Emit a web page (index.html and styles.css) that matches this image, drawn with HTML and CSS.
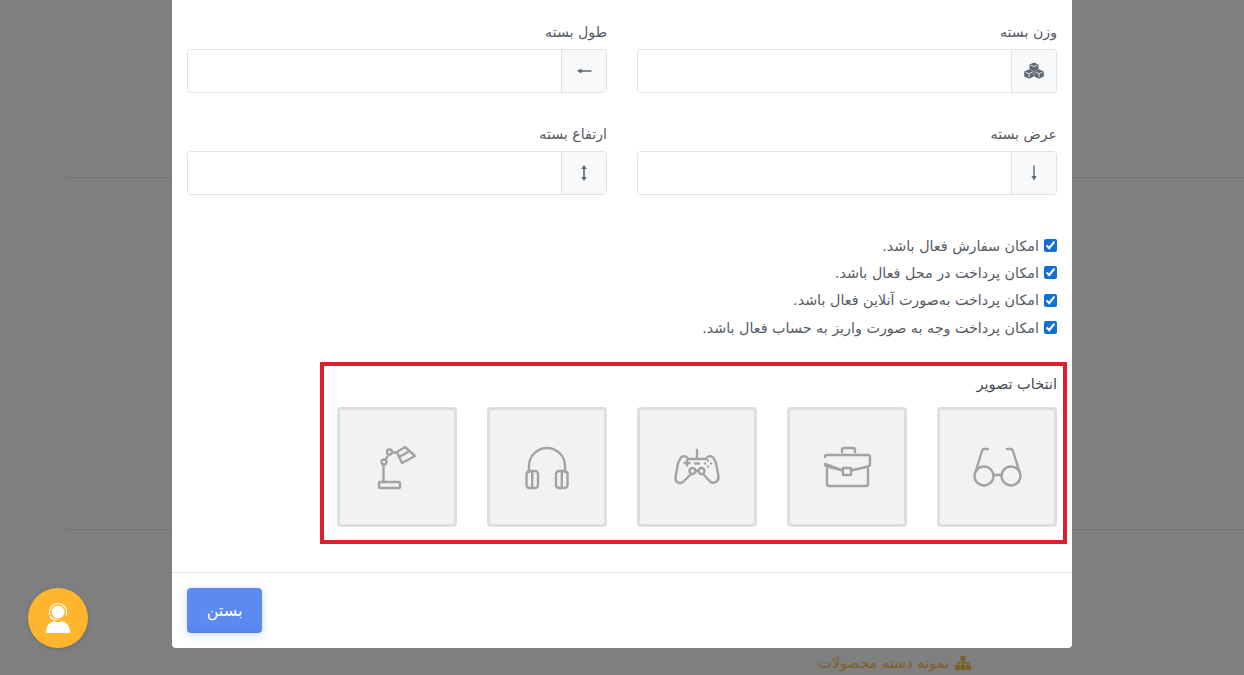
FILE: index.html
```html
<!DOCTYPE html>
<html lang="fa" dir="rtl">
<head>
    <meta charset="UTF-8">
    <meta name="viewport" content="width=device-width, initial-scale=1.0">
    <title>انتخاب تصویر</title>
    <link rel="stylesheet" href="styles.css">
</head>
<body>
    <!-- Page behind the dialog -->
    <div class="page">
        <div class="page-line"></div>
        <div class="page-line page-line-low"></div>
        <div class="page-title">
            <svg class="page-title-icon" viewBox="0 0 16 14"><path d="M5.500 0h5v4.500H8.700V6H14v3h2v5h-5V9h1.600V7.500H8.700V9H10.500v5h-5V9h1.800V7.500H3.400V9H5v5H0V9h2V6h5.300V4.500H5.500z"/></svg>
            <span>نمونه دسته محصولات</span>
        </div>
    </div>

    <!-- Support button -->
    <div class="support">
        <svg viewBox="0 0 60 60" width="60" height="60">
            <circle cx="30" cy="24" r="6.500" fill="#fff"/>
            <path d="M21.500 27v-3a8.500 8.500 0 0 1 17 0v3" fill="none" stroke="#fff" stroke-width="1.200"/>
            <path d="M22 28c1 3 4 3.500 7 3.500" fill="none" stroke="#fff" stroke-width="1.200"/>
            <path d="M18 45c-.500-6 3-10.500 8-12 2.500 1.500 5.500 1.500 8 0 5 1.500 8.500 6 8 12z" fill="#fff"/>
        </svg>
    </div>

    <div class="modal">
        <div class="modal-body">
            <div class="form-grid">
                <div class="field">
                    <label class="field-label">وزن بسته</label>
                    <div class="input-group">
                        <span class="addon">
                            <svg viewBox="0 0 20 18" width="20" height="18"><path class="solid" d="M10 .500l4.500 2v4.800L10 9.300l-4.500-2V2.500zM5 7.200l4.800 2.200v5L5 16.800l-4.800-2.400v-5zM15 7.200l4.800 2.200v5L15 16.800l-4.800-2.400v-5z"/><path class="cube-line" d="M6.500 3L10 4.600 13.500 3M1.500 10L5 11.700 8.500 10M5 11.700v3.600M11.500 10l3.500 1.700 3.500-1.700M15 11.700v3.600"/></svg>
                        </span>
                        <input class="text-input" type="text">
                    </div>
                </div>
                <div class="field">
                    <label class="field-label">طول بسته</label>
                    <div class="input-group">
                        <span class="addon">
                            <svg viewBox="0 0 16 16" width="16" height="16"><path class="solid" d="M1 8l4.500-2.600v1.900H15.500v1.400H5.500v1.900z"/></svg>
                        </span>
                        <input class="text-input" type="text">
                    </div>
                </div>
                <div class="field">
                    <label class="field-label">عرض بسته</label>
                    <div class="input-group">
                        <span class="addon">
                            <svg viewBox="0 0 16 16" width="16" height="16"><path class="solid" d="M8 15.500l-2.600-4.500h1.900V.500h1.400V11h1.900z"/></svg>
                        </span>
                        <input class="text-input" type="text">
                    </div>
                </div>
                <div class="field">
                    <label class="field-label">ارتفاع بسته</label>
                    <div class="input-group">
                        <span class="addon">
                            <svg viewBox="0 0 16 16" width="16" height="16"><path class="solid" d="M8 0l2.800 4H8.800v8h2L8 16l-2.800-4h2V4h-2z"/></svg>
                        </span>
                        <input class="text-input" type="text">
                    </div>
                </div>
            </div>

            <div class="checks">
                <label class="check"><input type="checkbox" checked> امکان سفارش فعال باشد.</label>
                <label class="check"><input type="checkbox" checked> امکان پرداخت در محل فعال باشد.</label>
                <label class="check"><input type="checkbox" checked> امکان پرداخت به‌صورت آنلاین فعال باشد.</label>
                <label class="check"><input type="checkbox" checked> امکان پرداخت وجه به صورت واریز به حساب فعال باشد.</label>
            </div>

            <div class="picker">
                <div class="picker-title">انتخاب تصویر</div>
                <div class="tiles">
                    <div class="tile">
                        <svg class="tile-icon" viewBox="0 0 60 60">
                            <circle cx="17" cy="39" r="9.500"/>
                            <circle cx="44" cy="39" r="9.500"/>
                            <path d="M26.500 38h8M8.500 35L15 14q.500-2 2.500-2H21M52.500 35L46 14q-.500-2-2.500-2H40"/>
                        </svg>
                    </div>
                    <div class="tile">
                        <svg class="tile-icon" viewBox="0 0 60 60">
                            <path d="M25 15v-2q0-2 2-2h9q2 0 2 2v2"/>
                            <path d="M8 20q0-2 2-2h41q2 0 2 2v7q0 2-2 2.500L34 33.500M26 33.500L10 29.500q-2-.5-2-2.500z"/>
                            <path d="M10 32v15q0 2 2 2h37q2 0 2-2V32"/>
                            <rect x="26" y="31" width="8" height="7"/>
                        </svg>
                    </div>
                    <div class="tile">
                        <svg class="tile-icon" viewBox="0 0 60 60">
                            <path d="M30 13v9"/>
                            <path d="M21 22h18c1-3 4.500-3.500 7-1.500 2 2 3 5 3.500 8l2 11c.500 5-5 8-8.500 5L37 38M23 38l-6.500 6.500C13 48 8 45 8.500 40l2-11c.500-3 1.500-6 3.500-8.500 2.500-2 6-1.500 7 1.500"/>
                            <circle cx="25.500" cy="34" r="3"/>
                            <circle cx="34.500" cy="34" r="3"/>
                            <path d="M28.500 34h3M20 23.500v5M17.500 26h5M28 26.500h4"/>
                            <path d="M41 23.500v.1M38 26.500v.1M44 26.500v.1M41 29.500v.1"/>
                        </svg>
                    </div>
                    <div class="tile">
                        <svg class="tile-icon" viewBox="0 0 60 60">
                            <path d="M12 35v-6a18 18 0 0 1 36 0v6"/>
                            <rect x="9.500" y="34" width="11.500" height="17" rx="3"/>
                            <rect x="39" y="34" width="11.500" height="17" rx="3"/>
                            <path d="M15.200 35v15M44.800 35v15"/>
                        </svg>
                    </div>
                    <div class="tile">
                        <svg class="tile-icon" viewBox="0 0 60 60">
                            <rect x="12" y="45" width="21" height="6" rx="1"/>
                            <circle cx="17" cy="25" r="2.500"/>
                            <circle cx="22.500" cy="15" r="2.500"/>
                            <path d="M16.500 27.500V45M18.500 23l3-5.500M25 15l5 1"/>
                            <path d="M30 15l8-5 10 9-13 7z"/>
                            <path d="M32 20l9-5"/>
                        </svg>
                    </div>
                </div>
            </div>
        </div>

        <div class="modal-footer">
            <button class="btn-close" type="button">بستن</button>
        </div>
    </div>
</body>
</html>
```

FILE: styles.css
```css
* {
  box-sizing: border-box;
}

html,
body {
  height: 100%;
  margin: 0;
  overflow: hidden;
}

body {
  background: #7f7f7f;
  font-family: "DejaVu Sans", "Noto Sans", sans-serif;
  font-size: 14px;
  color: #565a62;
}

/* Page behind the dialog */
.page {
  height: 100%;
  padding-top: 177px;
}

.page-line {
  height: 1px;
  margin-left: 67px;
  background: #747474;
}

.page-line-low {
  margin-top: 351px;
}

.page-title {
  display: flex;
  align-items: center;
  gap: 6px;
  margin-top: 125px;
  margin-right: 273px;
  color: #7d5f25;
  font-size: 14.5px;
}

.page-title-icon {
  width: 16px;
  height: 14px;
  fill: #7d5f25;
}

/* Support button */
.support {
  position: absolute;
  left: 28px;
  top: 588px;
  width: 60px;
  height: 60px;
  border-radius: 50%;
  background: #ffb52e;
  box-shadow: 0 1px 4px rgba(0, 0, 0, 0.15);
}

/* Dialog */
.modal {
  position: absolute;
  left: 172px;
  top: 0;
  width: 900px;
  height: 648px;
  background: #fff;
  border-radius: 0 0 4px 4px;
}

.modal-body {
  height: 572px;
  padding: 20px 15px 0;
}

.form-grid {
  display: grid;
  grid-template-columns: 420px 420px;
  gap: 29px 30px;
}

.field-label {
  display: block;
  height: 21px;
  margin-bottom: 8px;
  padding-top: 2px;
  line-height: 21px;
  font-size: 14.2px;
}

.input-group {
  display: flex;
  height: 44px;
  border: 1px solid #e1e1e1;
  border-radius: 4px;
  overflow: hidden;
}

.addon {
  display: flex;
  align-items: center;
  justify-content: center;
  width: 45px;
  border-left: 1px solid #e1e1e1;
  background: #f8f9fa;
}

.solid {
  fill: #5f6772;
}

.cube-line {
  fill: none;
  stroke: #f8f9fa;
  stroke-width: 0.8;
}

.text-input {
  flex: 1;
  min-width: 0;
  border: 0;
  outline: 0;
  background: #fff;
}

/* Checkbox list */
.checks {
  margin-top: 37px;
}

.check {
  display: flex;
  align-items: center;
  gap: 5px;
  height: 27.3px;
  font-size: 14.3px;
}

.check input {
  width: 13px;
  height: 13px;
  margin: 0;
  accent-color: #1170d8;
}

/* Image picker, outlined in red */
.picker {
  width: 747px;
  height: 182px;
  margin-top: 21px;
  margin-right: -10px;
  padding: 7px 6px 0 0;
  border: 4px solid #e11d2e;
}

.picker-title {
  height: 21px;
  margin-bottom: 13px;
  padding-top: 1px;
  line-height: 21px;
  font-size: 14.5px;
  color: #44474d;
}

.tiles {
  display: flex;
  gap: 30px;
}

.tile {
  display: flex;
  align-items: center;
  justify-content: center;
  width: 120px;
  height: 120px;
  border: 3px solid #dedede;
  border-radius: 4px;
  background: #f2f2f2;
}

.tile-icon {
  width: 60px;
  height: 60px;
  fill: none;
  stroke: #a3a3a3;
  stroke-width: 2.4;
  stroke-linecap: round;
  stroke-linejoin: round;
}

/* Footer */
.modal-footer {
  padding: 15px;
  border-top: 1px solid #e6e6e6;
}

.btn-close {
  display: block;
  width: 75px;
  height: 45px;
  margin-right: auto;
  border: 0;
  border-radius: 4px;
  background: linear-gradient(#5c8bf0 80%, #5284ee);
  box-shadow: 0 2px 10px rgba(82, 132, 238, 0.3);
  color: #fff;
  font-family: inherit;
  font-size: 16px;
}
```
